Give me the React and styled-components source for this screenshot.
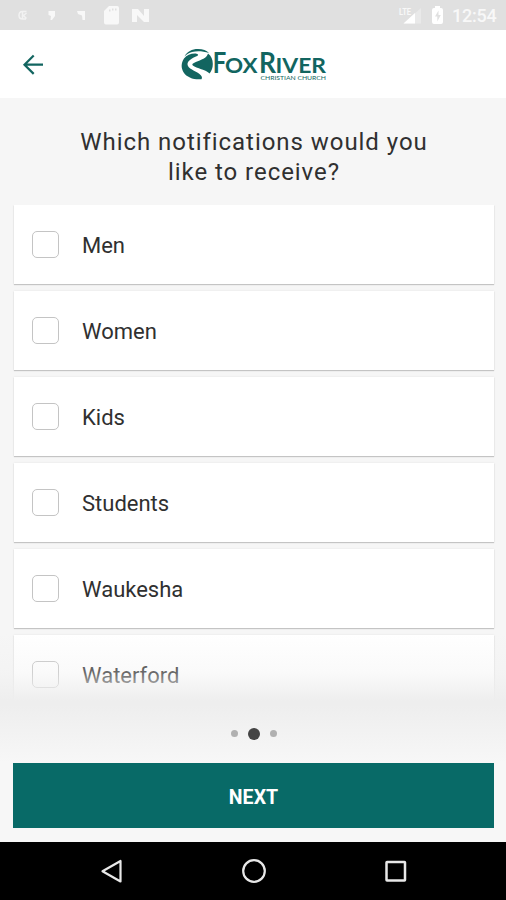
import React, { useState } from "react";
import styled, { createGlobalStyle } from "styled-components";

const GlobalStyle = createGlobalStyle`
  * {
    box-sizing: border-box;
  }

  body {
    margin: 0;
    font-family: Roboto, "Liberation Sans", sans-serif;
    color: #333;
  }
`;

const Screen = styled.div`
  display: flex;
  flex-direction: column;
  width: 506px;
  height: 900px;
  overflow: hidden;
  background: #f6f6f6;
`;

const StatusBar = styled.div`
  display: flex;
  flex: none;
  align-items: center;
  justify-content: space-between;
  height: 30px;
  padding: 0 9px 0 16px;
  background: #e0e0e0;
`;

const StatusGroup = styled.div`
  display: flex;
  align-items: center;
  height: 30px;
`;

const Clock = styled.span`
  width: 45px;
  margin-left: 8px;
  padding-top: 2px;
  font-size: 18px;
  font-weight: 500;
  line-height: 28px;
  letter-spacing: -0.25px;
  white-space: nowrap;
  color: #f8f8f8;
`;

const Header = styled.header`
  display: grid;
  flex: none;
  grid-template-columns: 66px 1fr 66px;
  align-items: center;
  height: 68px;
  background: #fff;
`;

const BackButton = styled.button`
  display: flex;
  align-items: center;
  justify-content: center;
  height: 68px;
  padding: 2px 0 0;
  border: 0;
  background: none;
`;

const LogoWrap = styled.div`
  display: flex;
  justify-content: center;
  padding-left: 2px;

  svg {
    overflow: visible;
  }
`;

const Title = styled.h1`
  flex: none;
  height: 107px;
  margin: 0;
  padding: 29px 0 0 2px;
  font-size: 24px;
  font-weight: 400;
  line-height: 30px;
  letter-spacing: 0.95px;
  text-align: center;
  color: #303030;
`;

const List = styled.div`
  position: relative;
  display: flex;
  flex: none;
  flex-direction: column;
  gap: 7px;
  height: 500px;
  padding: 0 12.5px 0 14px;
  overflow: hidden;
`;

const Fade = styled.div`
  position: absolute;
  right: 0;
  bottom: 0;
  left: 0;
  height: 72px;
  background: linear-gradient(rgba(238, 238, 238, 0), rgba(238, 238, 238, 0.3) 55%, #eee 94%);
  pointer-events: none;
`;

const Row = styled.label`
  display: flex;
  flex: none;
  align-items: center;
  height: 79px;
  padding-left: 18px;
  background: #fff;
  box-shadow: 0 1px 1px rgba(0, 0, 0, 0.18), 0 0 2px rgba(0, 0, 0, 0.08);
  cursor: pointer;
`;

const Checkbox = styled.input`
  appearance: none;
  width: 27px;
  height: 27px;
  margin: 0 23px 1px 0;
  border: 1.5px solid #c4c4c4;
  border-radius: 5px;
  background: ${props => (props.checked ? "#086a67" : "#fff")};
`;

const Label = styled.span`
  padding-top: 2px;
  font-size: 22px;
  line-height: 28px;
  color: #303030;
`;

const Footer = styled.div`
  display: flex;
  flex: 1;
  flex-direction: column;
  padding: 0 12px 0 13px;
  background: linear-gradient(#eee, #f7f7f7 58px);
`;

const Dots = styled.div`
  display: flex;
  align-items: center;
  justify-content: center;
  height: 58px;
  padding-bottom: 1px;
  gap: 10px;
`;

const Dot = styled.span`
  width: ${props => (props.$active ? "12px" : "7px")};
  height: ${props => (props.$active ? "12px" : "7px")};
  border-radius: 50%;
  background: ${props => (props.$active ? "#444" : "#b0b0b0")};
`;

const NextButton = styled.button`
  height: 65px;
  padding: 4px 0 0;
  border: 0;
  background: #086a67;
  font-family: inherit;
  font-size: 19.5px;
  font-weight: 700;
  letter-spacing: 0.1px;
  color: #fff;
`;

const NavBar = styled.nav`
  display: flex;
  flex: none;
  align-items: center;
  justify-content: space-between;
  height: 58px;
  padding: 0 97px 0 98px;
  background: #000;
`;

const groups = ["Men", "Women", "Kids", "Students", "Waukesha", "Waterford"];

const StatusIcons = () => (
  <svg width="140" height="30" viewBox="16 0 140 30" fill="#f8f8f8">
    <path
      d="M26.500 11.500h-4c-2.500 0-3.500 1.500-3.500 4s1.500 3.500 3.500 3.500h3.500M22.500 12v7M26.500 13l-3 2.500 3 3"
      fill="none"
      stroke="#f2f2f2"
      strokeWidth="1.500"
    />
    <path d="M48.500 11h6.500v5l-3 4h-1.500l.5-4-2.500-1z" />
    <path d="M77 11h8v9h-2.500l-.5-4.500-4-1.500z" />
    <path
      fillRule="evenodd"
      d="M109 6h8q2 0 2 2v14.500q0 2-2 2h-11q-2 0-2-2V11zM109 9.500v2h1.500v-2zM112 8.500v2h1.500v-2zM115 8.500v2h1.500v-2z"
    />
    <path d="M132 9h6l6 7V9h5v13h-5l-7-7v7h-5z" />
  </svg>
);

const SignalIcons = () => (
  <svg width="46" height="30" viewBox="400 0 46 30">
    <path d="M423 8v15.500h-17.500z" fill="#e9e9e9" />
    <path d="M417 13v10.500h-11.500z" fill="#fff" />
    <text
      x="401"
      y="14.500"
      fontFamily="Roboto, sans-serif"
      fontSize="9"
      fontWeight="700"
      textLength="12"
      lengthAdjust="spacingAndGlyphs"
      fill="#f8f8f8"
    >
      LTE
    </text>
    <path
      fillRule="evenodd"
      fill="#fff"
      d="M437 6h5v2h1q2 0 2 2v12q0 2-2 2h-7q-2 0-2-2V10q0-2 2-2h1zM440.500 10.500l-3.500 6h2.300v5l3.500-6.500h-2.300z"
    />
  </svg>
);

const Logo = () => (
  <svg width="146" height="34" viewBox="181 47 146 34" fill="#126560">
    <path d="M184.500 56.500C187 51.500 192 49 198 49c5 0 8.500 1.500 11 4-6-2-12-2.500-17-1-3 .8-5.500 2.300-7.500 4.500z" />
    <path d="M184 58.500c3-3.500 7.500-5.300 12.500-4.800 2 .4 2.300 1.500 0 2.600-4.500 2-9 4.500-9 8 0 4.500 8 6.500 12 9.700 2.500 2 3 3.500 2 5.200-7 .8-14.500-1.500-18-7-2.500-4.500-2.500-9 .5-13.700z" />
    <path d="M208 53.500c3.300 2.500 4.800 6 4.800 10.500 0 3.700-1 6.700-3.200 9.500-3.500-4-13-5-16.800-8-1.300-1.200 0-2.300 3-3.500 5.200-2 11.200-4 12.200-8.500z" />
    <g fontFamily="Lato, sans-serif" fontWeight="700">
      <text x="212.700" y="72.800" fontSize="28" textLength="13.500" lengthAdjust="spacingAndGlyphs">
        F
      </text>
      <text x="225" y="72.800" fontSize="21.500" textLength="32.500" lengthAdjust="spacingAndGlyphs">
        OX
      </text>
      <text x="259" y="72.800" fontSize="28" textLength="17" lengthAdjust="spacingAndGlyphs">
        R
      </text>
      <text x="275.500" y="72.800" fontSize="21.500" textLength="50.500" lengthAdjust="spacingAndGlyphs">
        IVER
      </text>
      <text
        x="260.500"
        y="79.500"
        fontSize="6.300"
        fontWeight="400"
        textLength="65.500"
        lengthAdjust="spacingAndGlyphs"
      >
        CHRISTIAN CHURCH
      </text>
    </g>
  </svg>
);

const App = () => {
  const [selected, setSelected] = useState([]);

  const toggle = name => {
    setSelected(
      selected.includes(name) ? selected.filter(cur => cur !== name) : selected.concat(name)
    );
  };

  return (
    <Screen>
      <GlobalStyle />
      <StatusBar>
        <StatusGroup>
          <StatusIcons />
        </StatusGroup>
        <StatusGroup>
          <SignalIcons />
          <Clock>12:54</Clock>
        </StatusGroup>
      </StatusBar>
      <Header>
        <BackButton aria-label="Back">
          <svg width="22" height="22" viewBox="22 54 22 22" fill="none" stroke="#126560" strokeWidth="2.200">
            <path d="M43 64.700H24.500M33.700 55.500l-9.200 9.200 9.200 9.200" />
          </svg>
        </BackButton>
        <LogoWrap>
          <Logo />
        </LogoWrap>
      </Header>
      <Title>
        Which notifications would you
        <br />
        like to receive?
      </Title>
      <List>
        {groups.map(name => (
          <Row key={name}>
            <Checkbox
              type="checkbox"
              checked={selected.includes(name)}
              onChange={() => toggle(name)}
            />
            <Label>{name}</Label>
          </Row>
        ))}
        <Fade />
      </List>
      <Footer>
        <Dots>
          <Dot />
          <Dot $active />
          <Dot />
        </Dots>
        <NextButton>NEXT</NextButton>
      </Footer>
      <NavBar>
        <svg width="26" height="26" viewBox="0 0 26 26" fill="none" stroke="#e8e8e8" strokeWidth="2.200">
          <path d="M22.500 3v20.500L4.500 13.200z" strokeLinejoin="round" />
        </svg>
        <svg width="26" height="26" viewBox="0 0 26 26" fill="none" stroke="#e8e8e8" strokeWidth="2.200">
          <circle cx="13" cy="13" r="10.800" />
        </svg>
        <svg width="26" height="26" viewBox="0 0 26 26" fill="none" stroke="#e8e8e8" strokeWidth="2.500">
          <rect x="3.500" y="4" width="18.500" height="18.500" rx="0.500" />
        </svg>
      </NavBar>
    </Screen>
  );
};

export default App;
